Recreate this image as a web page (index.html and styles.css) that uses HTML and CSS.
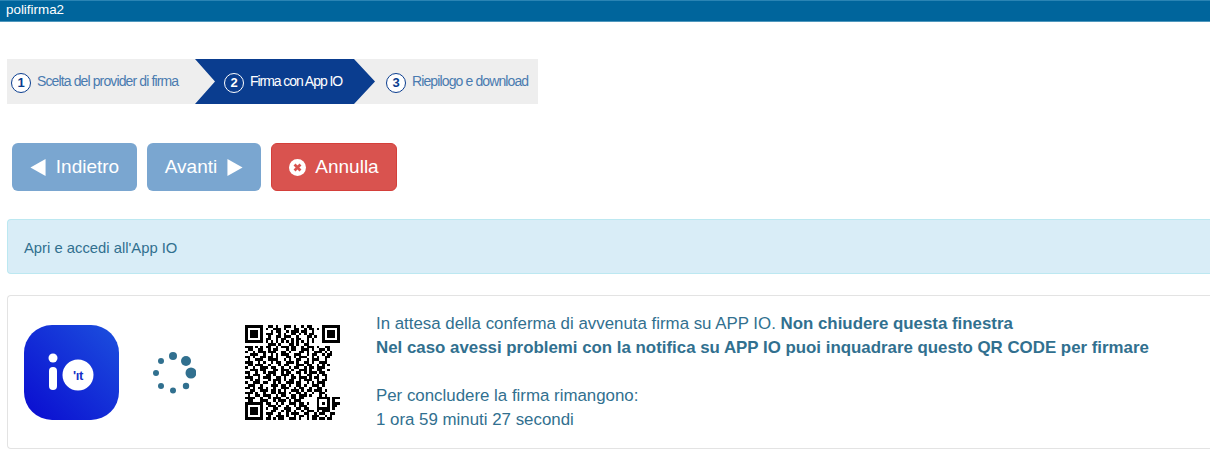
FILE: index.html
```html
<!DOCTYPE html>
<html lang="it">
<head>
<meta charset="utf-8">
<title>polifirma2</title>
<link rel="stylesheet" href="styles.css">
</head>
<body>
<header class="topbar">polifirma2</header>
<main class="page">
  <ol class="steps">
    <li class="step step-first"><span class="num">1</span><span class="label">Scelta del provider di firma</span></li>
    <li class="step step-active"><span class="num">2</span><span class="label">Firma con App IO</span></li>
    <li class="step step-last"><span class="num">3</span><span class="label">Riepilogo e download</span></li>
  </ol>
  <div class="actions">
    <button class="btn btn-nav btn-back" type="button"><svg class="tri" viewBox="0 0 16 18"><path d="M0 9 16 0v18z"/></svg>Indietro</button>
    <button class="btn btn-nav btn-next" type="button">Avanti<svg class="tri" viewBox="0 0 16 18"><path d="M16 9 0 0v18z"/></svg></button>
    <button class="btn btn-cancel" type="button"><svg class="xc" viewBox="0 0 16 16"><circle cx="8" cy="8" r="8" fill="#fff"/><path d="M5.200 5.200l5.600 5.600m0-5.600l-5.600 5.600" stroke="#d9534f" stroke-width="2.600" fill="none"/></svg>Annulla</button>
  </div>
  <div class="alert">Apri e accedi all'App IO</div>
  <section class="card">
    <svg class="logo" viewBox="0 0 95 95">
      <defs><linearGradient id="lg" x1="0" y1="1" x2="1" y2="0"><stop offset="0" stop-color="#0a0bd0"/><stop offset="1" stop-color="#1c50de"/></linearGradient></defs>
      <rect width="95" height="95" rx="28" fill="url(#lg)"/>
      <circle cx="29" cy="33" r="4.500" fill="#fff"/>
      <rect x="25" y="42" width="8" height="23" rx="4" fill="#fff"/>
      <circle cx="54" cy="50" r="15.500" fill="#fff"/>
      <text class="logo-text" x="54" y="55">'ıt</text>
    </svg>
    <svg class="spinner" viewBox="0 0 46 46" fill="#31708f">
      <circle cx="23" cy="6" r="4"/>
      <circle cx="36" cy="11" r="5"/>
      <circle cx="41" cy="23" r="5.500"/>
      <circle cx="36" cy="36" r="3.200"/>
      <circle cx="23" cy="40.500" r="3"/>
      <circle cx="11" cy="36" r="3"/>
      <circle cx="6" cy="23" r="3"/>
      <circle cx="11" cy="11" r="3"/>
    </svg>
    <svg class="qr" viewBox="0 0 37 37" shape-rendering="crispEdges">
      <path fill-rule="evenodd" d="M0 0h7v7h-7zM1 1v5h5v-5zM2 2h3v3h-3zM30 0h7v7h-7zM31 1v5h5v-5zM32 2h3v3h-3zM0 30h7v7h-7zM1 31v5h5v-5zM2 32h3v3h-3zM28 28h5v5h-5zM29 29v3h3v-3zM30 30h1v1h-1z"/>
      <path fill="none" stroke="#000" d="M9 .5h2m1 0h1m2 0h3m1 0h1m2 0h1m1 0h2
      M8 1.500h1m2 0h3m1 0h1m3 0h2m2 0h1m1 0h2m1 0h1
      M10 2.500h1m1 0h2m2 0h1m1 0h3m1 0h2m2 0h1
      M8 3.500h3m2 0h1m1 0h1m2 0h2m1 0h1m1 0h1m1 0h2
      M9 4.500h1m2 0h2m1 0h3m2 0h1m3 0h2m1 0h1
      M8 5.500h2m2 0h1m1 0h2m2 0h1m1 0h2m2 0h1m1 0h1
      M8 6.500h1m1 0h1m1 0h1m1 0h1m1 0h1m1 0h1m1 0h1m1 0h1m1 0h1m1 0h1
      M9 7.500h3m1 0h1m3 0h2m1 0h1m2 0h2
      M0 8.500h3m1 0h1m1 0h1m1 0h2m2 0h1m1 0h3m1 0h2m2 0h1m1 0h3m1 0h1m2 0h2
      M1 9.500h2m2 0h2m2 0h1m1 0h2m3 0h1m1 0h2m2 0h3m1 0h1m2 0h2m1 0h1
      M0 10.500h1m2 0h1m1 0h3m1 0h3m2 0h2m1 0h1m3 0h2m1 0h1m2 0h3m1 0h1m1 0h1
      M2 11.500h3m2 0h1m2 0h1m1 0h1m1 0h3m2 0h3m2 0h1m1 0h2m2 0h1m1 0h2
      M0 12.500h2m1 0h1m2 0h2m1 0h2m1 0h1m3 0h2m1 0h1m1 0h3m2 0h1m1 0h1m2 0h2
      M1 13.500h1m2 0h3m2 0h4m2 0h1m1 0h1m2 0h2m2 0h1m1 0h3m2 0h1
      M0 14.500h3m2 0h1m1 0h1m2 0h1m1 0h2m2 0h3m1 0h1m2 0h2m1 0h1m2 0h3
      M1 15.500h2m1 0h3m2 0h1m3 0h1m1 0h2m3 0h3m1 0h2m2 0h1m1 0h1m1 0h1
      M0 16.500h1m2 0h1m2 0h3m1 0h2m2 0h1m2 0h1m1 0h2m2 0h1m1 0h2m1 0h3
      M2 17.500h3m1 0h2m3 0h2m1 0h3m1 0h1m2 0h3m1 0h1m2 0h2m2 0h1
      M0 18.500h2m2 0h1m2 0h1m1 0h3m2 0h1m1 0h2m2 0h2m1 0h1m1 0h3m1 0h2
      M1 19.500h1m1 0h3m2 0h2m1 0h1m2 0h3m1 0h1m2 0h1m2 0h2m2 0h1m1 0h2
      M0 20.500h3m2 0h1m1 0h3m2 0h2m1 0h1m2 0h2m1 0h3m1 0h1m1 0h2m2 0h1
      M2 21.500h1m1 0h2m3 0h1m1 0h3m1 0h1m1 0h2m2 0h1m1 0h3m2 0h1m1 0h2
      M0 22.500h1m2 0h3m1 0h2m2 0h1m1 0h1m2 0h3m1 0h2m2 0h1m1 0h1m1 0h3
      M1 23.500h3m2 0h1m3 0h3m1 0h2m1 0h1m2 0h2m1 0h1m2 0h3m1 0h1
      M0 24.500h2m1 0h1m1 0h2m1 0h1m2 0h1m2 0h3m2 0h1m1 0h2m2 0h1m2 0h2
      M2 25.500h2m2 0h3m1 0h2m1 0h1m1 0h1m2 0h3m1 0h1m1 0h2m1 0h3m1 0h1
      M0 26.500h3m1 0h1m2 0h1m2 0h2m1 0h3m1 0h1m2 0h2m1 0h1m2 0h1m2 0h2
      M1 27.500h1m2 0h2m1 0h3m2 0h1m1 0h2m2 0h2m1 0h3m1 0h1m3 0h1m1 0h1
      M0 28.500h4m2 0h1m2 0h1m1 0h3m2 0h1m1 0h2m1 0h2M34 28.500h3
      M1 29.500h2m3 0h3m2 0h1m1 0h3m1 0h1m1 0h3M34 29.500h1
      M8 30.500h2m2 0h1m1 0h1m2 0h3m1 0h2m1 0h1M34 30.500h3
      M9 31.500h3m1 0h1m2 0h1m2 0h1m1 0h3M34 31.500h2
      M8 32.500h1m2 0h2m2 0h3m2 0h2m1 0h2M34 32.500h1
      M10 33.500h2m2 0h1m1 0h2m1 0h1m2 0h1m1 0h3m1 0h1m1 0h3
      M8 34.500h3m2 0h1m2 0h1m1 0h3m2 0h2m2 0h1m1 0h2m2 0h2
      M9 35.500h1m2 0h3m1 0h1m2 0h1m1 0h2m1 0h1m1 0h3m2 0h1m1 0h1
      M8 36.500h2m1 0h1m1 0h2m2 0h3m1 0h1m2 0h1m1 0h2m1 0h2m1 0h2"/>
    </svg>
    <div class="message">
      <p>In attesa della conferma di avvenuta firma su APP IO. <strong>Non chiudere questa finestra</strong><br><strong>Nel caso avessi problemi con la notifica su APP IO puoi inquadrare questo QR CODE per firmare</strong></p>
      <p>Per concludere la firma rimangono:<br>1 ora 59 minuti 27 secondi</p>
    </div>
  </section>
</main>
</body>
</html>
```
FILE: styles.css
```css
* { box-sizing: border-box; }
html, body { margin: 0; padding: 0; background: #fff; overflow: hidden; }
body { font-family: "Liberation Sans", Arial, sans-serif; color: #31708f; height: 454px; }

.topbar {
  height: 22px;
  padding: 1px 0 0 6px;
  background: #00659c;
  border-top: 1px solid #2a84b4;
  border-bottom: 1px solid #4f97bd;
  color: #fff;
  font-size: 13.400px;
  line-height: 16px;
}

.page { padding: 37px 0 0 7px; }

.steps {
  display: flex;
  width: 531px;
  height: 45px;
  margin: 0;
  padding: 0;
  list-style: none;
  background: #eee;
}
.step {
  display: flex;
  align-items: center;
  gap: 6px;
  color: #4a7bb0;
  font-size: 14px;
  letter-spacing: -0.880px;
}
.step-first { width: 188px; padding: 0 0 0 4px; }
.step-active {
  width: 180px;
  padding: 0 0 0 29px;
  background: #0a3d8f;
  color: #fff;
  letter-spacing: -1.050px;
  clip-path: polygon(0 0, 159px 0, 100% 50%, 159px 100%, 0 100%, 20px 50%);
}
.step-last { flex: 1; padding: 0 0 0 11px; }
.label { margin-bottom: 2px; }
.num {
  flex: none;
  width: 20px;
  height: 20px;
  margin-top: 2px;
  border: 1.500px solid #0a3d8f;
  border-radius: 50%;
  background: #fff;
  color: #0a3d8f;
  font-size: 13px;
  font-weight: bold;
  line-height: 17px;
  letter-spacing: 0;
  text-align: center;
}
.step-active .num { background: #0a3d8f; border-color: #fff; color: #fff; }

.actions { display: flex; gap: 10px; padding: 39px 0 0 5px; }
.btn {
  display: flex;
  align-items: center;
  justify-content: center;
  gap: 10px;
  height: 48px;
  padding: 0;
  border: 1px solid transparent;
  border-radius: 6px;
  color: #fff;
  font: 19px "Liberation Sans", Arial, sans-serif;
}
.btn-nav { background: #7aa6d0; }
.btn-back { width: 125px; }
.btn-next { width: 114px; }
.btn-cancel { width: 126px; gap: 9px; background: #d9534f; border-color: #d43f3a; }
.tri { width: 16px; height: 17px; fill: #fff; }
.xc { width: 17px; height: 17px; }

.alert {
  height: 55px;
  margin-top: 28px;
  padding: 18px 0 0 16px;
  background: #d9edf7;
  border: 1px solid #bce8f1;
  border-right: 0;
  border-radius: 4px 0 0 4px;
  font-size: 14.800px;
  line-height: 20px;
}

.card {
  display: flex;
  align-items: flex-start;
  height: 154px;
  margin-top: 21px;
  padding: 16px 0 0 16px;
  background: #fff;
  border: 1px solid #e3e3e3;
  border-right: 0;
  border-radius: 4px 0 0 4px;
}
.logo { flex: none; width: 95px; height: 95px; margin-top: 13px; }
.logo-text { fill: #1730c8; font: bold 13px "Liberation Sans", Arial, sans-serif; text-anchor: middle; letter-spacing: -0.3px; }
.spinner { flex: none; width: 46px; height: 46px; margin: 38px 0 0 31px; }
.qr { flex: none; width: 95px; height: 95px; margin: 13px 0 0 49px; }
.message { flex: 1; padding-left: 36px; font-size: 16.860px; line-height: 24px; }
.message p { margin: 0 0 24px; }
```
